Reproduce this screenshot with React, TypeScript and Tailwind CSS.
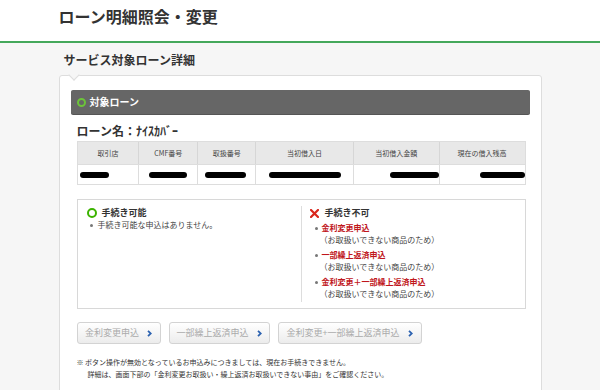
import React from 'react';

const font = { fontFamily: '"Noto Sans CJK JP", "Noto Sans", sans-serif' };

const Ring = ({ size = 9, color = '#5cb82b' }: { size?: number; color?: string }) => (
  <span
    className="inline-block rounded-full shrink-0"
    style={{ width: size, height: size, border: `2px solid ${color}` }}
  />
);

const Cross = () => (
  <svg width="9" height="9" viewBox="0 0 9 9" className="shrink-0">
    <path d="M1 1 L8 8 M8 1 L1 8" stroke="#d9261c" strokeWidth="2.2" strokeLinecap="square" />
  </svg>
);

const Redacted = ({ w, ml }: { w: number; ml: number }) => (
  <span className="block h-[6px] rounded-full bg-black" style={{ width: w, marginLeft: ml }} />
);

const columns = [
  { label: '取引店', w: 61, bar: 29, ml: 2 },
  { label: 'CMF番号', w: 59, bar: 38, ml: 10 },
  { label: '取扱番号', w: 58, bar: 41, ml: 7 },
  { label: '当初借入日', w: 98, bar: 72, ml: 13 },
  { label: '当初借入金額', w: 86, bar: 51, ml: 36 },
  { label: '現在の借入残高', w: 86, bar: 45, ml: 40 },
];

const ngItems = ['金利変更申込', '一部繰上返済申込', '金利変更＋一部繰上返済申込'];

const buttons = [
  { label: '金利変更申込', w: 84 },
  { label: '一部繰上返済申込', w: 101 },
  { label: '金利変更+一部繰上返済申込', w: 144 },
];

export default function App() {
  return (
    <div className="w-[600px] h-[390px] overflow-hidden bg-[#f6f6f6] text-[#333]" style={font}>
      {/* Header */}
      <div className="bg-white h-[41px] border-b-2 border-[#45a85b] box-content">
        <div className="w-[483px] mx-auto pt-[4px]">
          <h1 className="text-[16px] font-bold leading-[24px]">ローン明細照会・変更</h1>
        </div>
      </div>

      <div className="w-[483px] mx-auto">
        <h2 className="text-[12px] font-bold leading-[16px] pt-[9px] pl-[5px]">サービス対象ローン詳細</h2>

        {/* Card */}
        <div className="relative mt-[7px] bg-white border border-[#dddddd] rounded-[3px] pt-[14px] px-[11px] pb-[20px]">
          <span className="absolute -top-[5px] left-[10px] w-[8px] h-[8px] rotate-45 bg-[#f6f6f6] border-r border-b border-[#dddddd]" />

          <div className="h-[24px] bg-[#666666] rounded-[2px] flex items-center pl-[6px] gap-[4px] shadow-[0_1px_0_#555]">
            <Ring size={9} color="#6cc43a" />
            <span className="text-[10px] font-bold text-white leading-none">対象ローン</span>
          </div>

          <div className="px-[6px]">
            <div className="mt-[10px] text-[12px] font-bold leading-[14px]">ローン名：ﾅｲｽｶﾊﾞｰ</div>

            {/* Loan table */}
            <div className="mt-[3px] w-[449px] border border-[#dddddd]">
              <div className="flex bg-[#e8e8e8] h-[22px]">
                {columns.map((c, i) => (
                  <div
                    key={c.label}
                    className={`flex items-center justify-center text-[7px] text-[#444] ${i > 0 ? 'border-l border-[#d6d6d6]' : ''}`}
                    style={{ width: c.w }}
                  >
                    {c.label}
                  </div>
                ))}
              </div>
              <div className="flex h-[20px] border-t border-[#dddddd]">
                {columns.map((c, i) => (
                  <div
                    key={c.label}
                    className={`flex items-center ${i > 0 ? 'border-l border-[#dddddd]' : ''}`}
                    style={{ width: c.w }}
                  >
                    <Redacted w={c.bar} ml={c.ml} />
                  </div>
                ))}
              </div>
            </div>

            {/* Status box */}
            <div className="mt-[14px] w-[449px] h-[110px] border border-[#d8d8d8] flex py-[6px]">
              <div className="w-[224px] border-r border-[#dddddd] pl-[9px] pt-[1px]">
                <div className="flex items-center gap-[5px]">
                  <Ring size={10} color="#3cb300" />
                  <span className="text-[9px] font-bold leading-[12px]">手続き可能</span>
                </div>
                <div className="flex items-center text-[8px] text-[#444] leading-[12px]">
                  <span className="w-[3px] h-[3px] rounded-full bg-[#777] ml-[3px] mr-[5px]" />
                  手続き可能な申込はありません。
                </div>
              </div>
              <div className="flex-1 pl-[8px] pt-[1px]">
                <div className="flex items-center gap-[6px]">
                  <Cross />
                  <span className="text-[9px] font-bold leading-[12px]">手続き不可</span>
                </div>
                <div className="mt-[3px] flex flex-col gap-[3px]">
                  {ngItems.map((t) => (
                    <div key={t}>
                      <div className="flex items-center text-[8px] font-bold text-[#c0161c] leading-[12px]">
                        <span className="w-[3px] h-[3px] rounded-full bg-[#777] ml-[5px] mr-[4px]" />
                        {t}
                      </div>
                      <div className="text-[8px] text-[#444] leading-[12px] pl-[10px]">（お取扱いできない商品のため）</div>
                    </div>
                  ))}
                </div>
              </div>
            </div>

            {/* Buttons */}
            <div className="mt-[13px] flex gap-[8px]">
              {buttons.map((b) => (
                <div
                  key={b.label}
                  className="h-[22px] flex items-center justify-center gap-[8px] rounded-[3px] border border-[#d3d3d3] bg-gradient-to-b from-white to-[#ececec] text-[9px] text-[#aaaaaa]"
                  style={{ width: b.w }}
                >
                  <span>{b.label}</span>
                  <svg width="5" height="7" viewBox="0 0 5 7">
                    <path d="M1 0.8 L3.8 3.5 L1 6.2" stroke="#2c62b0" strokeWidth="1.8" fill="none" />
                  </svg>
                </div>
              ))}
            </div>

            {/* Notes */}
            <div className="mt-[12px] text-[7px] leading-[12px] text-[#333]">
              <div>※&nbsp;ボタン操作が無効となっているお申込みにつきましては、現在お手続きできません。</div>
              <div className="pl-[11px]">詳細は、画面下部の「金利変更お取扱い・繰上返済お取扱いできない事由」をご確認ください。</div>
            </div>
          </div>
        </div>
      </div>
    </div>
  );
}
